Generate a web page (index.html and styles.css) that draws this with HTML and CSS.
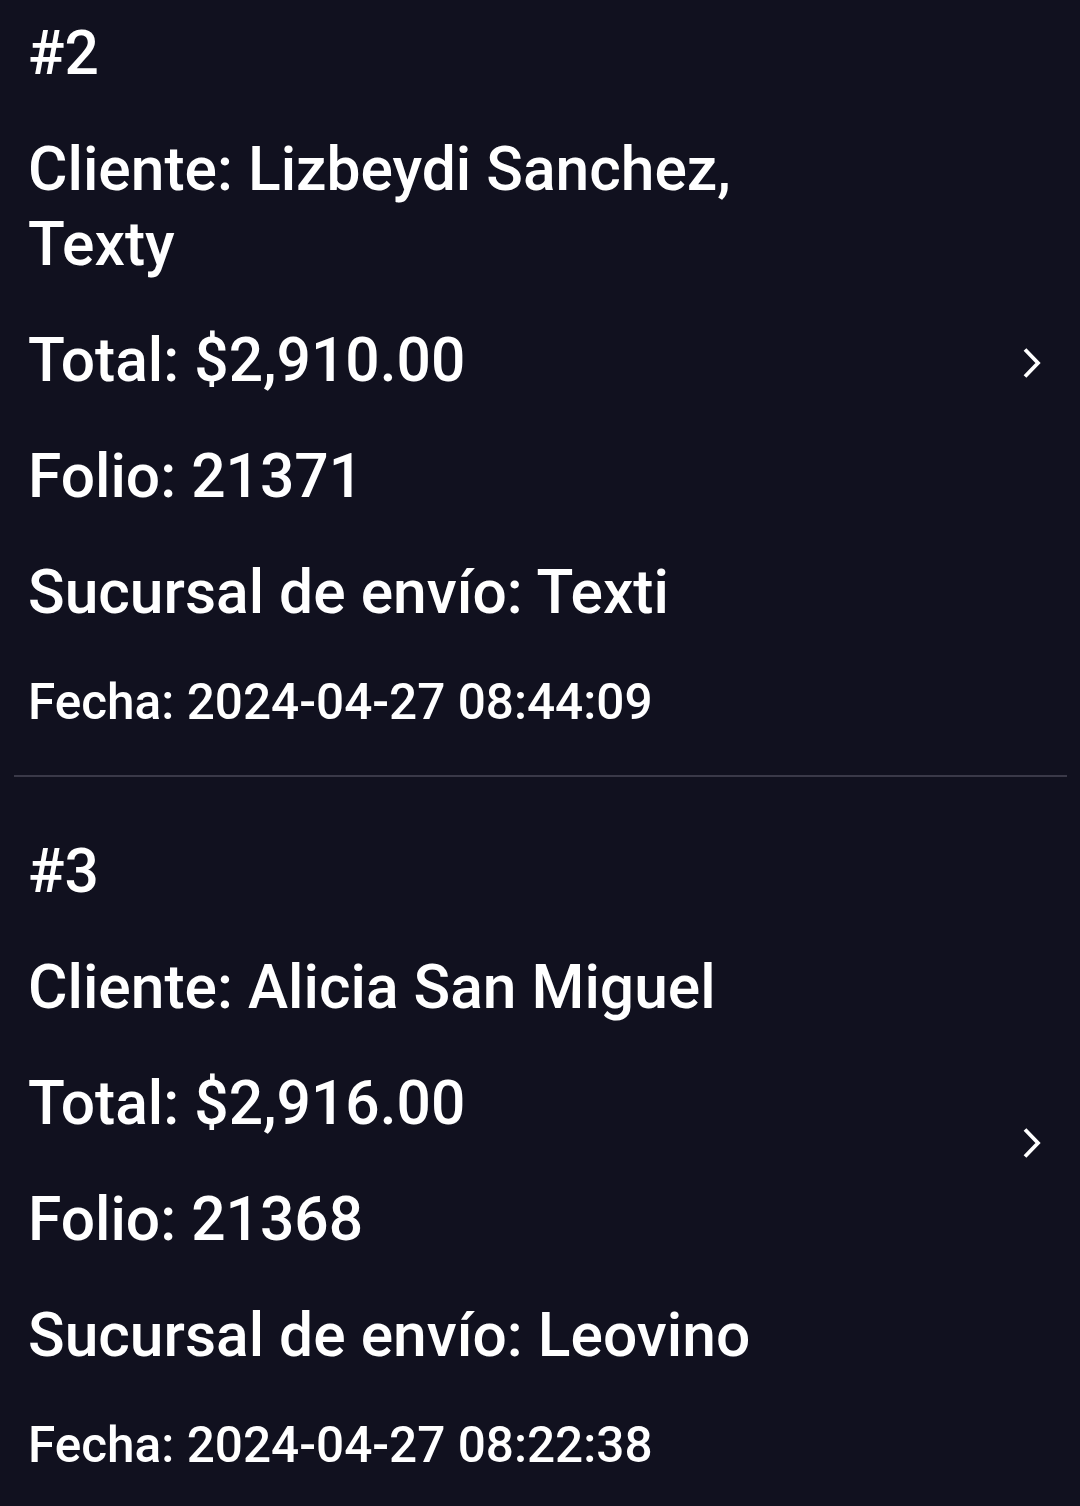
FILE: index.html
```html
<!DOCTYPE html>
<html>
<head>
  <title>Pedidos</title>
  <link rel="stylesheet" href="styles.css">
</head>
<body>
  <div class="order-list">
    <div class="order">
      <div class="order-info">
        <p class="line">#2</p>
        <p class="line">Cliente: Lizbeydi Sanchez, Texty</p>
        <p class="line">Total: $2,910.00</p>
        <p class="line">Folio: 21371</p>
        <p class="line">Sucursal de envío: Texti</p>
        <p class="line date">Fecha: 2024-04-27 08:44:09</p>
      </div>
      <svg class="chevron" width="20" height="32" viewBox="0 0 20 32">
        <polyline points="3,2.5 16,16 3,29.5" fill="none" stroke="#fff" stroke-width="3.8"/>
      </svg>
    </div>

    <div class="order">
      <div class="order-info">
        <p class="line">#3</p>
        <p class="line">Cliente: Alicia San Miguel</p>
        <p class="line">Total: $2,916.00</p>
        <p class="line">Folio: 21368</p>
        <p class="line">Sucursal de envío: Leovino</p>
        <p class="line date">Fecha: 2024-04-27 08:22:38</p>
      </div>
      <svg class="chevron" width="20" height="32" viewBox="0 0 20 32">
        <polyline points="3,2.5 16,16 3,29.5" fill="none" stroke="#fff" stroke-width="3.8"/>
      </svg>
    </div>
  </div>
</body>
</html>
```

FILE: styles.css
```css
/* Base */
body {
  margin: 0;
  background: #11111f;
  color: #fff;
  font-family: Roboto, "Noto Sans", sans-serif;
  overflow: hidden;
}

/* List, scrolled a little */
.order-list {
  margin: -41px 13px 0 14px;
}

.order {
  display: flex;
  align-items: center;
  padding: 57px 25px 44px 14px;
  border-bottom: 2px solid #3a3948;
}

.order-info {
  width: 790px;
  display: flex;
  flex-direction: column;
  gap: 41px;
}

.line {
  margin: 0;
  font-size: 60.5px;
  font-weight: 500;
  line-height: 75px;
}

.line.date {
  font-size: 49.5px;
  line-height: 58px;
  margin-top: 2px;
}

.chevron {
  margin-left: auto;
  margin-top: -22px;
}
```
